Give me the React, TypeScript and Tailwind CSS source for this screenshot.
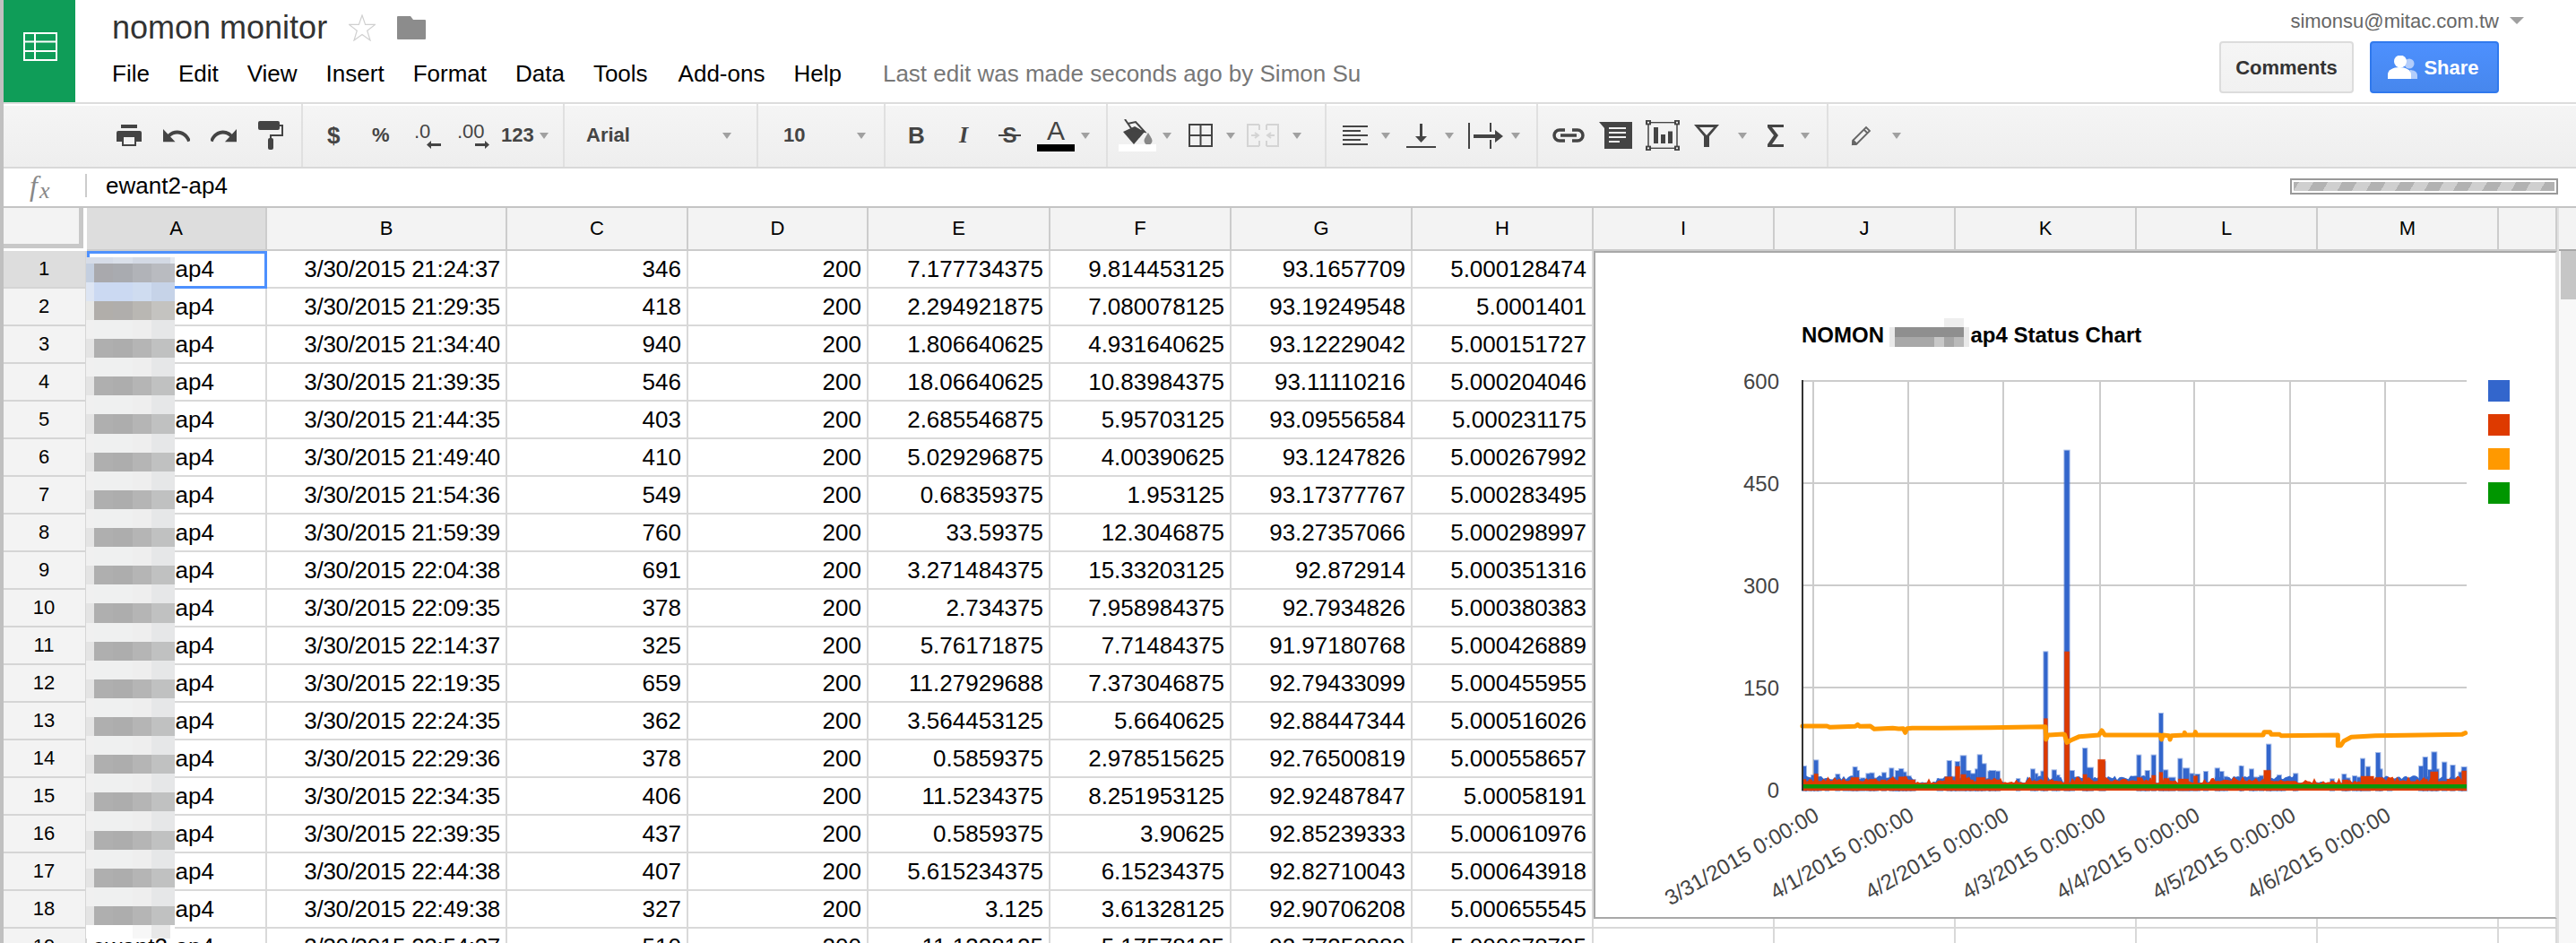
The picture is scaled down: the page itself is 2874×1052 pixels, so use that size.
import React from "react";

const rows: string[][] = [
  ["3/30/2015 21:24:37","346","200","7.177734375","9.814453125","93.1657709","5.000128474"],
  ["3/30/2015 21:29:35","418","200","2.294921875","7.080078125","93.19249548","5.0001401"],
  ["3/30/2015 21:34:40","940","200","1.806640625","4.931640625","93.12229042","5.000151727"],
  ["3/30/2015 21:39:35","546","200","18.06640625","10.83984375","93.11110216","5.000204046"],
  ["3/30/2015 21:44:35","403","200","2.685546875","5.95703125","93.09556584","5.000231175"],
  ["3/30/2015 21:49:40","410","200","5.029296875","4.00390625","93.1247826","5.000267992"],
  ["3/30/2015 21:54:36","549","200","0.68359375","1.953125","93.17377767","5.000283495"],
  ["3/30/2015 21:59:39","760","200","33.59375","12.3046875","93.27357066","5.000298997"],
  ["3/30/2015 22:04:38","691","200","3.271484375","15.33203125","92.872914","5.000351316"],
  ["3/30/2015 22:09:35","378","200","2.734375","7.958984375","92.7934826","5.000380383"],
  ["3/30/2015 22:14:37","325","200","5.76171875","7.71484375","91.97180768","5.000426889"],
  ["3/30/2015 22:19:35","659","200","11.27929688","7.373046875","92.79433099","5.000455955"],
  ["3/30/2015 22:24:35","362","200","3.564453125","5.6640625","92.88447344","5.000516026"],
  ["3/30/2015 22:29:36","378","200","0.5859375","2.978515625","92.76500819","5.000558657"],
  ["3/30/2015 22:34:35","406","200","11.5234375","8.251953125","92.92487847","5.00058191"],
  ["3/30/2015 22:39:35","437","200","0.5859375","3.90625","92.85239333","5.000610976"],
  ["3/30/2015 22:44:38","407","200","5.615234375","6.15234375","92.82710043","5.000643918"],
  ["3/30/2015 22:49:38","327","200","3.125","3.61328125","92.90706208","5.000655545"],
  ["3/30/2015 22:54:37","510","200","11.1328125","5.17578125","92.77350889","5.000678795"],
];

const cols = "grid grid-cols-[93px_201px_268px_202px_201px_203px_202px_202px_202px_202px_202px_202px_202px_202px_65px]";
const letters = ["A","B","C","D","E","F","G","H","I","J","K","L","M",""];

const Arrow = ({ cls = "" }: { cls?: string }) => (
  <span className={"block w-0 h-0 shrink-0 border-x-[5px] border-t-[7px] border-x-transparent border-t-[#a0a0a0] " + cls} />
);

// [x1, x2, top] in crop coordinates
const blueZ10 = [[18,30,225],[30,45,270],[48,57,255],[57,70,205],[70,80,265],[95,105,273],[130,142,252],[155,170,273],[175,187,265],[188,200,228],[200,207,240],[213,225,265],[232,245,250],[245,257,248],[258,270,265],[285,297,247],[310,322,232],[322,340,262],[330,342,240],[342,355,234],[355,365,245],[365,380,258],[380,395,270],[470,487,267],[503,516,207],[516,530,260],[530,543,210],[548,565,190],[565,580,240],[580,597,250],[597,605,235],[605,618,187],[618,632,217],[640,645,242]];
const blueZ7 = [[0,18,420],[20,33,422],[90,100,447],[138,150,415],[152,160,430],[172,180,422],[181,193,22],[209,222,418],[225,233,435],[250,266,-652],[268,282,420],[312,325,345],[325,345,410],[368,386,390],[493,505,368],[508,520,445],[521,534,420],[542,555,368],[567,579,228],[582,595,418],[600,620,443],[631,643,380],[648,667,412],[670,682,430],[688,702,432],[717,729,423],[755,768,412],[770,782,423],[785,795,440],[836,840,405]];
const blueZ11 = [[0,8,225],[30,42,235],[42,55,262],[63,75,257],[87,100,152],[100,120,270],[123,135,255],[137,148,270],[177,190,250],[300,312,268],[340,352,252],[352,365,265],[375,387,258],[390,402,262],[402,414,200],[420,432,227],[453,466,180],[466,473,235],[492,505,270],[597,610,225],[611,624,195],[627,640,237],[640,655,178],[655,662,235],[675,688,212],[703,716,222],[730,740,245],[740,755,228]];
const redZ10 = [[20,30,268],[40,50,270],[57,70,250],[180,207,262],[240,265,268],[280,297,270],[310,325,267],[340,365,260],[365,395,270],[495,520,260],[530,545,225],[548,565,252],[575,590,270],[600,630,262],[640,645,268]];
const redZ7 = [[0,35,450],[181,193,245],[250,266,21],[312,325,432],[325,345,452],[362,386,382],[493,505,442],[522,534,455],[542,555,435],[567,579,425],[582,600,445],[600,620,455],[631,665,447],[682,695,437],[755,768,458],[800,830,458]];
const redZ11 = [[0,10,275],[77,100,238],[175,185,275],[340,360,270],[402,445,258],[450,475,262],[610,625,268],[635,660,243],[690,715,268],[740,755,240]];

const toRects = (a: number[][], x0: number, y0: number) =>
  a.map(([p, q, t]) => ({ x: x0 + p / 3, w: (q - p) / 3, y: y0 + t / 3 }));

const blue = [...toRects(blueZ10, 2005, 780), ...toRects(blueZ7, 2220, 720), ...toRects(blueZ11, 2500, 780)];
const red = [...toRects(redZ10, 2005, 780), ...toRects(redZ7, 2220, 720), ...toRects(redZ11, 2500, 780)];

const orangeZ10 = [[18,90],[100,90],[110,94],[195,91],[203,85],[210,91],[245,90],[258,100],[320,97],[340,99],[355,98],[362,112],[368,98],[385,97],[480,97],[560,96],[645,95]];
const orangeZ7 = [[0,275],[180,272],[186,272],[188,315],[195,300],[245,297],[250,298],[258,325],[270,318],[300,305],[365,300],[375,285],[385,300],[550,300],[570,300],[575,315],[580,300],[600,302],[603,315],[608,302],[650,300],[652,292],[655,300],[685,300],[688,290],[692,300],[840,300]];
const orangeZ11 = [[0,120],[75,120],[78,110],[98,110],[102,118],[130,118],[135,122],[325,120],[325,155],[335,155],[345,140],[370,127],[450,122],[600,120],[740,118],[752,113]];
const orangePts = [
  ...orangeZ10.map(([p, q]) => `${2005 + p / 3},${780 + q / 3}`),
  ...orangeZ7.map(([p, q]) => `${2220 + p / 3},${720 + q / 3}`),
  ...orangeZ11.map(([p, q]) => `${2500 + p / 3},${780 + q / 3}`),
].join(" ");

let seed = 12345;
const rnd = () => {
  seed = (seed * 1103515 + 12345) % 2147483648;
  return seed / 2147483648;
};
const active = [[2012,2135],[2160,2228],[2262,2300],[2310,2400],[2470,2560],[2640,2752]];
let fuzz = "M2012 882";
let blueFuzz = "M2012 882";
for (let x = 2012; x < 2752; x += 2.5) {
  const r = rnd();
  const on = active.some(([a, b]) => x >= a && x <= b);
  fuzz += ` L${x} ${(on ? 871.5 : 873.5) - r * r * r * 6}`;
  blueFuzz += ` L${x} ${on ? 870 - rnd() * 5 : 874 - rnd() * 2}`;
}
fuzz += " L2752 882 Z";
blueFuzz += " L2752 882 Z";

const gridX = [2023, 2129, 2235, 2343, 2448, 2555, 2661];
const gridY = [425, 539, 653, 767];
const xLabels = ["3/31/2015 0:00:00","4/1/2015 0:00:00","4/2/2015 0:00:00","4/3/2015 0:00:00","4/4/2015 0:00:00","4/5/2015 0:00:00","4/6/2015 0:00:00"];

function Chart() {
  return (
    <div className="absolute left-[1778px] top-[280px] w-[1075px] h-[745px] bg-white border-2 border-[#a8a8a8] border-r-[#e0e0e0]">
      <svg viewBox="1780 282 1071 741" className="block w-[1071px] h-[741px]" fontFamily="'Liberation Sans', sans-serif">
        <text x="2010" y="382" fontSize="24" fontWeight="700" fill="#000">NOMON</text>
        <text x="2198.500" y="382" fontSize="24" fontWeight="700" fill="#000">ap4 Status Chart</text>
        <rect x="2169" y="355" width="22" height="10" fill="#eeeeee" />
        <rect x="2108" y="365" width="89" height="22" fill="#e9e9e9" />
        <rect x="2114" y="365" width="77" height="11" fill="#8f8f8f" />
        <rect x="2114" y="376" width="44" height="11" fill="#a8a8a8" />
        <rect x="2158" y="376" width="11" height="11" fill="#c8c8c8" />
        <rect x="2169" y="376" width="11" height="11" fill="#a6a6a6" />
        <rect x="2180" y="376" width="11" height="11" fill="#bababa" />
        {gridX.map((x) => <rect key={x} x={x - 1} y="424" width="2" height="458" fill="#cccccc" />)}
        {gridY.map((y) => <rect key={y} x="2012" y={y - 1} width="740" height="2" fill="#cccccc" />)}
        {["600","450","300","150","0"].map((t, i) => (
          <text key={t} x="1985" y={[434, 548, 662, 776, 890][i]} fontSize="24" textAnchor="end" fill="#444444">{t}</text>
        ))}
        {xLabels.map((t, i) => (
          <text key={t} transform={`translate(${gridX[i] + 8} 914) rotate(-30)`} fontSize="24" textAnchor="end" fill="#444444">{t}</text>
        ))}
        <path d={blueFuzz} fill="#3366cc" />
        <g fill="#3366cc" stroke="#3366cc" strokeOpacity="0.45" strokeWidth="2">
          {blue.map((b, i) => <rect key={i} x={b.x} y={b.y} width={b.w} height={882 - b.y} />)}
        </g>
        <path d={fuzz} fill="#de3a00" />
        <g fill="#de3a00" stroke="#de3a00" strokeOpacity="0.4" strokeWidth="1">
          {red.map((b, i) => <rect key={i} x={b.x} y={b.y} width={b.w} height={882 - b.y} />)}
        </g>
        <polyline points={orangePts} fill="none" stroke="#ff9900" strokeWidth="5" strokeLinejoin="round" strokeLinecap="round" />
        <rect x="2012" y="875" width="740" height="4.5" fill="#0a960a" />
        <rect x="2010" y="424" width="2" height="458" fill="#333333" />
        <rect x="2776" y="424" width="24" height="24" fill="#3366cc" />
        <rect x="2776" y="462" width="24" height="24" fill="#de3a00" />
        <rect x="2776" y="500" width="24" height="24" fill="#ff9900" />
        <rect x="2776" y="538" width="24" height="24" fill="#009600" />
      </svg>
    </div>
  );
}

const firstBands = [
  { h: "h-[7px]", c: ["#d6dce8","#d6dce8","#dae0ea","#d3d9e4","#d3d9e4","#e6eaf0"] },
  { h: "h-[21px]", c: ["#c4cfe0","#a9a9ad","#a9abb0","#b1b3b8","#b9bbc0","#bcbec4"] },
  { h: "h-[21px]", c: ["#dde5f3","#cbd9f2","#cbd9f2","#cfdcf0","#c6d3e8","#c6d3e8"] },
  { h: "h-[21px]", c: ["#e8e8e6","#b1aeaa","#b0aeac","#b9b7b3","#c4c3c0","#c4c3c0"] },
];
const light = ["#f0f0f0","#eff0f0","#eff0f0","#eeeeee","#e6e7e8","#e6e7e8"];
const dark = ["#e4e4e4","#afafaf","#adadad","#b5b5b5","#c0c1c1","#c0c1c1"];
const tileW = ["w-[9px]","w-[21px]","w-[22px]","w-[21px]","w-[21px]","w-[5px]"];

function Mosaic() {
  const bands = [...firstBands];
  for (let i = 0; i < 16; i++) {
    bands.push({ h: "h-[21.1px]", c: light });
    bands.push({ h: "h-[21.1px]", c: dark });
  }
  bands.push({ h: "h-[15px]", c: ["#ffffff","#ffffff","#ffffff","#f7f7f7","#e8e8e8","#ffffff"] });
  return (
    <div className="absolute left-[92px] top-[55px] w-[99px] flex flex-col">
      {bands.map((b, i) => (
        <div key={i} className={"flex " + b.h}>
          {b.c.map((c, j) => <div key={j} className={"h-full " + tileW[j]} style={{ background: c }} />)}
        </div>
      ))}
    </div>
  );
}

function Section({ w, children }: { w: string; children?: React.ReactNode }) {
  return <div className={"flex items-center h-full shrink-0 border-r-2 border-[#e0e0e0] " + w}>{children}</div>;
}

const ic = "#444444";

function Toolbar() {
  return (
    <div className="flex h-[74px] border-t-2 border-b-2 border-t-[#dddddd] border-b-[#d9d9d9] bg-gradient-to-b from-[#f5f5f5] to-[#eeeeee] shadow-[inset_0_2px_0_#ffffff] text-[#444444]">
      <Section w="w-[334px]">
        <svg viewBox="0 0 28 24" className="ml-[126px] w-[28px] h-[24px]" fill={ic}>
          <rect x="5" y="0" width="18" height="4" />
          <path d="M2 7h24a2 2 0 0 1 2 2v10h-6v5H6v-5H0V9a2 2 0 0 1 2-2z" />
          <rect x="8" y="14" width="12" height="8" fill="#f2f2f2" />
        </svg>
        <svg viewBox="2 7 20 9.5" className="ml-[24px] w-[30px] h-[15px]" fill={ic} preserveAspectRatio="none">
          <path d="M12.5 8c-2.65 0-5.05.99-6.9 2.6L2 7v9h9l-3.62-3.62c1.39-1.16 3.16-1.88 5.12-1.88 3.54 0 6.55 2.31 7.6 5.5l2.37-.78C21.08 11.03 17.15 8 12.5 8z" />
        </svg>
        <svg viewBox="2 7 20 9.5" className="ml-[23px] w-[29px] h-[15px] -scale-x-100" fill={ic} preserveAspectRatio="none">
          <path d="M12.5 8c-2.65 0-5.05.99-6.9 2.6L2 7v9h9l-3.62-3.62c1.39-1.16 3.16-1.88 5.12-1.88 3.54 0 6.55 2.31 7.6 5.5l2.37-.78C21.08 11.03 17.15 8 12.5 8z" />
        </svg>
        <svg viewBox="0 0 28 32" className="ml-[24px] w-[28px] h-[32px]" fill={ic}>
          <rect x="0" y="0" width="24" height="10" rx="2" />
          <path d="M24 4h4v13H15v4h-2v-6h13V6h-2z" />
          <rect x="11" y="19" width="6" height="13" rx="2" />
        </svg>
      </Section>
      <Section w="w-[292px]">
        <span className="ml-[27px] w-[14px] text-[26px] font-bold leading-none">$</span>
        <span className="ml-[36px] w-[20px] text-[22px] font-bold leading-none">%</span>
        <span className="ml-[27px] w-[30px] flex flex-col">
          <span className="text-[22px] leading-[20px]">.0</span>
          <svg viewBox="0 0 16 9" className="ml-[14px] w-[16px] h-[9px]" fill={ic}><path d="M0 4.5 5 0v3h11v3H5v3z" /></svg>
        </span>
        <span className="ml-[18px] w-[36px] flex flex-col">
          <span className="text-[22px] leading-[20px]">.00</span>
          <svg viewBox="0 0 16 9" className="ml-[20px] w-[16px] h-[9px]" fill={ic}><path d="M16 4.5 11 0v3H0v3h11v3z" /></svg>
        </span>
        <span className="ml-[13px] w-[37px] text-[22px] font-bold leading-none">123</span>
        <Arrow cls="ml-[6px]" />
      </Section>
      <Section w="w-[216px]">
        <span className="ml-[24px] w-[49px] text-[22px] font-bold leading-none">Arial</span>
        <Arrow cls="ml-[103px]" />
      </Section>
      <Section w="w-[142px]">
        <span className="ml-[28px] w-[25px] text-[22px] font-bold leading-none">10</span>
        <Arrow cls="ml-[57px]" />
      </Section>
      <Section w="w-[248px]">
        <span className="ml-[25px] w-[19px] text-[26px] font-bold leading-none">B</span>
        <span className="ml-[33px] w-[20px] text-[26px] font-bold italic leading-none text-center font-['Liberation_Serif',serif]">I</span>
        <span className="relative ml-[29px] w-[25px] text-[24px] font-bold leading-none text-center">
          S
          <span className="absolute left-0 top-[11px] w-[25px] h-[2px] bg-[#444444]" />
        </span>
        <span className="ml-[18px] w-[42px] flex flex-col items-center">
          <span className="text-[30px] leading-[24px] font-light">A</span>
          <span className="block w-[42px] h-[8px] bg-black mt-[3px]" />
        </span>
        <Arrow cls="ml-[7px]" />
      </Section>
      <Section w="w-[244px]">
        <span className="ml-[12px] w-[42px] flex flex-col items-center">
          <svg viewBox="0 0 34 28" className="w-[34px] h-[28px]" fill={ic}>
            <path d="M1 14 L14 8 L25 14 L13 28 Z" />
            <path d="M3 0 L12 13" stroke={ic} strokeWidth="2" fill="none" />
            <path d="M6 5 L15 3 L25 14 L14 12" stroke={ic} strokeWidth="2" fill="none" />
            <path d="M29 15c3 5 4.500 7 4.500 9a4.500 4.500 0 0 1-9 0c0-2 1.500-4 4.500-9z" fill="#888888" />
          </svg>
          <span className="block w-[42px] h-[8px] bg-white" />
        </span>
        <Arrow cls="ml-[7px]" />
        <svg viewBox="0 0 27 26" className="ml-[19px] w-[27px] h-[26px]" fill="none" stroke={ic} strokeWidth="2">
          <rect x="1" y="1" width="25" height="24" /><path d="M13.500 1v24M1 13h25" />
        </svg>
        <Arrow cls="ml-[15px]" />
        <svg viewBox="0 0 36 26" className="ml-[13px] w-[36px] h-[26px]" fill="none" stroke="#d4d4d4" strokeWidth="2">
          <path d="M14 1H1v24h13M22 1h13v24H22M14 1v6M14 19v6M22 1v6M22 19v6" />
          <path d="M5 13h8M9 10l4 3-4 3M31 13h-8M27 10l-4 3 4 3" />
        </svg>
        <Arrow cls="ml-[15px]" />
      </Section>
      <Section w="w-[236px]">
        <svg viewBox="0 0 28 22" className="ml-[18px] w-[28px] h-[22px]" fill={ic}>
          <rect y="0" width="28" height="2" /><rect y="5" width="20" height="2" /><rect y="10" width="28" height="2" /><rect y="15" width="20" height="2" /><rect y="20" width="28" height="2" />
        </svg>
        <Arrow cls="ml-[15px]" />
        <svg viewBox="0 0 33 27" className="ml-[18px] w-[33px] h-[27px]" fill={ic}>
          <rect y="25" width="33" height="2" /><rect x="15" y="0" width="3" height="16" /><path d="M10 14h13l-6.500 7z" />
        </svg>
        <Arrow cls="ml-[10px]" />
        <svg viewBox="0 0 39 29" className="ml-[16px] w-[39px] h-[29px]" fill={ic}>
          <rect x="0" y="0" width="2" height="29" /><rect x="24" y="0" width="2" height="10" /><rect x="24" y="19" width="2" height="10" />
          <rect x="6" y="13" width="25" height="4" /><path d="M30 8l9 7-9 7z" />
        </svg>
        <Arrow cls="ml-[9px]" />
      </Section>
      <Section w="w-[324px]">
        <svg viewBox="0 0 36 16" className="ml-[16px] w-[36px] h-[16px]" fill="none" stroke={ic} strokeWidth="3.500">
          <path d="M14 2H8a6 6 0 0 0 0 12h6M22 2h6a6 6 0 0 1 0 12h-6M9 8h18" />
        </svg>
        <svg viewBox="0 0 37 30" className="ml-[16px] w-[37px] h-[30px]" fill={ic}>
          <path d="M0 0h37v30H6V7z" />
          <path d="M11 6h19v2H11zM11 11h19v2H11zM11 16h19v2H11zM11 21h12v2H11z" fill="#f2f2f2" />
        </svg>
        <svg viewBox="0 0 38 38" className="ml-[15px] w-[38px] h-[34px]" preserveAspectRatio="none">
          <rect x="3" y="3" width="32" height="32" fill="none" stroke={ic} strokeWidth="1.500" />
          <g fill="#f2f2f2" stroke={ic} strokeWidth="2">
            <rect x="1" y="1" width="4" height="4" /><rect x="33" y="1" width="4" height="4" /><rect x="1" y="33" width="4" height="4" /><rect x="33" y="33" width="4" height="4" />
          </g>
          <path d="M9 9h5v20H9zM17 18h5v11h-5zM25 14h5v15h-5z" fill={ic} />
        </svg>
        <svg viewBox="0 0 28 25" className="ml-[16px] w-[28px] h-[25px]" fill={ic}>
          <path d="M0 0h28l-11 13v12h-6V13zM6 3l8 9 8-9z" fillRule="evenodd" />
        </svg>
        <Arrow cls="ml-[21px]" />
        <svg viewBox="0 0 18 25" className="ml-[23px] w-[18px] h-[25px]" fill={ic}>
          <path d="M0 0h18v3H5l7 9-7 10h13v3H0v-3l7-10L0 3z" />
        </svg>
        <Arrow cls="ml-[19px]" />
      </Section>
      <div className="flex items-center h-full">
        <svg viewBox="0 0 24 24" className="ml-[25px] w-[24px] h-[24px]" fill="none" stroke="#666666" strokeWidth="1.800">
          <path d="M2 18 17 3l4 4L6 22H2zM14.500 5.500l4 4" /><path d="M2 22l1-4 3 3z" fill="#666666" />
        </svg>
        <Arrow cls="ml-[22px]" />
      </div>
    </div>
  );
}

function Header() {
  return (
    <div className="flex h-[114px] bg-white">
      <div className="w-[80px] h-full bg-[#0f9d58] flex items-center justify-center pb-[10px] pl-[2px] shrink-0">
        <svg viewBox="0 0 38 32" className="w-[38px] h-[32px]" fill="none" stroke="#ffffff" strokeWidth="2">
          <path d="M1 1h36v30H1zM1 10.500h36M1 21h36M13 1v30" />
        </svg>
      </div>
      <div className="ml-[41px] flex flex-col pt-[9px]">
        <div className="flex items-center h-[44px] text-[36px] text-[#333333]">
          <span>nomon monitor</span>
          <svg viewBox="0 0 30 30" className="ml-[24px] w-[30px] h-[30px]" fill="none" stroke="#d0d0d0" strokeWidth="1.200">
            <path d="M15 1l3.600 10.400H29.500l-8.800 6.800 3.300 10.800L15 22.500 6 29l3.300-10.800L.5 11.400h10.900z" />
          </svg>
          <svg viewBox="0 0 32 26" className="ml-[24px] w-[32px] h-[26px]" fill="#8c8c8c">
            <path d="M0 1a1 1 0 0 1 1-1h14l3 4h13a1 1 0 0 1 1 1v20a1 1 0 0 1-1 1H1a1 1 0 0 1-1-1z" />
          </svg>
        </div>
        <div className="mt-[14px] flex items-center gap-[32px] text-[26px] leading-[30px] text-black">
          <span>File</span>
          <span>Edit</span>
          <span>View</span>
          <span>Insert</span>
          <span>Format</span>
          <span>Data</span>
          <span>Tools</span>
          <span className="ml-[2px]">Add-ons</span>
          <span>Help</span>
          <span className="ml-[14px] text-[#777777]">Last edit was made seconds ago by Simon Su</span>
        </div>
      </div>
      <div className="ml-auto mr-[58px] flex flex-col items-end pt-[10px]">
        <div className="flex items-center h-[26px] text-[22px] text-[#666666]">
          <span>simonsu@mitac.com.tw</span>
          <Arrow cls="ml-[12px] border-x-[8px] border-t-[8px] border-t-[#999999]" />
        </div>
        <div className="mt-[10px] mr-[28px] flex gap-[18px] text-[22px] font-bold">
          <div className="w-[150px] h-[58px] flex items-center justify-center rounded-[4px] border-2 border-[#dcdcdc] bg-gradient-to-b from-[#f5f5f5] to-[#f1f1f1] text-[#333333]">Comments</div>
          <div className="w-[144px] h-[58px] flex items-center justify-center rounded-[4px] border-2 border-[#3079ed] bg-gradient-to-b from-[#4d90fe] to-[#4787ed] text-white">
            <svg viewBox="0 0 33 26" className="w-[33px] h-[26px] mr-[7px] -ml-[2px]">
              <circle cx="24" cy="9" r="5.500" fill="#b3cdfb" />
              <path d="M24 16c5 0 9 2 9 6v4h-8v-10z" fill="#b3cdfb" />
              <circle cx="14" cy="6.500" r="7" fill="#ffffff" />
              <path d="M0 26v-5c0-5 6-8 13-8s13 3 13 8v5z" fill="#ffffff" />
            </svg>
            <span>Share</span>
          </div>
        </div>
      </div>
    </div>
  );
}

function FormulaBar() {
  return (
    <div className="flex items-center h-[44px] pb-[4px] bg-white border-b-2 border-[#c4c4c4]">
      <span className="ml-[29px] w-[32px] flex items-baseline leading-none italic text-[#888888] font-['Liberation_Serif',serif]">
        <span className="text-[32px] leading-none">f</span>
        <span className="text-[26px] leading-none ml-[2px] relative top-[3px]">x</span>
      </span>
      <span className="ml-[30px] w-[2px] h-[26px] bg-[#cccccc]" />
      <span className="ml-[21px] text-[26px] leading-[30px] text-black">ewant2-ap4</span>
      <div className="ml-auto mr-[20px] mt-[2px] w-[299px] h-[18px] border-2 border-[#999999] bg-white p-[2px]">
        <div className="w-full h-full bg-[repeating-linear-gradient(-60deg,#b2b2b2_0px,#b2b2b2_14px,#cfcfcf_14px,#cfcfcf_28px)]" />
      </div>
    </div>
  );
}

function Grid() {
  const line = "border-r-2 border-b-2 border-[#d9d9d9]";
  return (
    <div className="flex-1 flex overflow-hidden relative">
      <div className="w-[2849px] shrink-0 text-black">
        <div className={cols + " h-[48px]"}>
          <div className="bg-[#f3f3f3] border-r-[5px] border-b-[5px] border-[#c8c8c8] mr-[4px] mb-[3px]" />
          {letters.map((l, i) => (
            <div key={i} className={"flex items-center justify-center text-[22px] border-r-2 border-b-2 border-[#cccccc] pb-[2px] " + (i === 0 ? "bg-[#dddddd]" : "bg-[#f3f3f3]")}>{l}</div>
          ))}
        </div>
        {rows.map((r, i) => (
          <div key={i} className={cols + " h-[42px]"}>
            <div className={"text-center pr-[1px] text-[22px] leading-[40px] border-r-2 border-b-2 border-[#d5d5d5] " + (i === 0 ? "bg-[#dddddd]" : "bg-[#f3f3f3]")}>{i + 1}</div>
            <div className={"pl-[6px] text-[26px] leading-[40px] overflow-hidden whitespace-nowrap " + (i === 0 ? "shadow-[inset_0_0_0_3px_#4d90fe]" : line)}>ewant2-ap4</div>
            {r.map((v, j) => (
              <div key={j} className={"pr-[6px] text-right text-[26px] leading-[40px] whitespace-nowrap overflow-hidden " + line + (j === 0 ? " tracking-[-0.3px]" : "")}>{v}</div>
            ))}
            {[0, 1, 2, 3, 4, 5].map((k) => <div key={k} className={line} />)}
          </div>
        ))}
      </div>
      <div className="w-[21px] shrink-0 bg-[#f8f8f8] border-l-2 border-[#e0e0e0]">
        <div className="h-[48px] bg-[#f3f3f3] border-b-2 border-[#a8a8a8]" />
        <div className="ml-auto w-[17px] h-[54px] bg-[#c6c6c6]" />
      </div>
      <Mosaic />
    </div>
  );
}

export default function App() {
  return (
    <div className="relative w-[2874px] h-[1052px] overflow-hidden bg-white border-l-4 border-l-[#c0c0c0] flex flex-col font-['Liberation_Sans',Arial,sans-serif]">
      <Header />
      <Toolbar />
      <FormulaBar />
      <Grid />
      <div className="absolute -left-[4px] top-0">
        <Chart />
      </div>
    </div>
  );
}
